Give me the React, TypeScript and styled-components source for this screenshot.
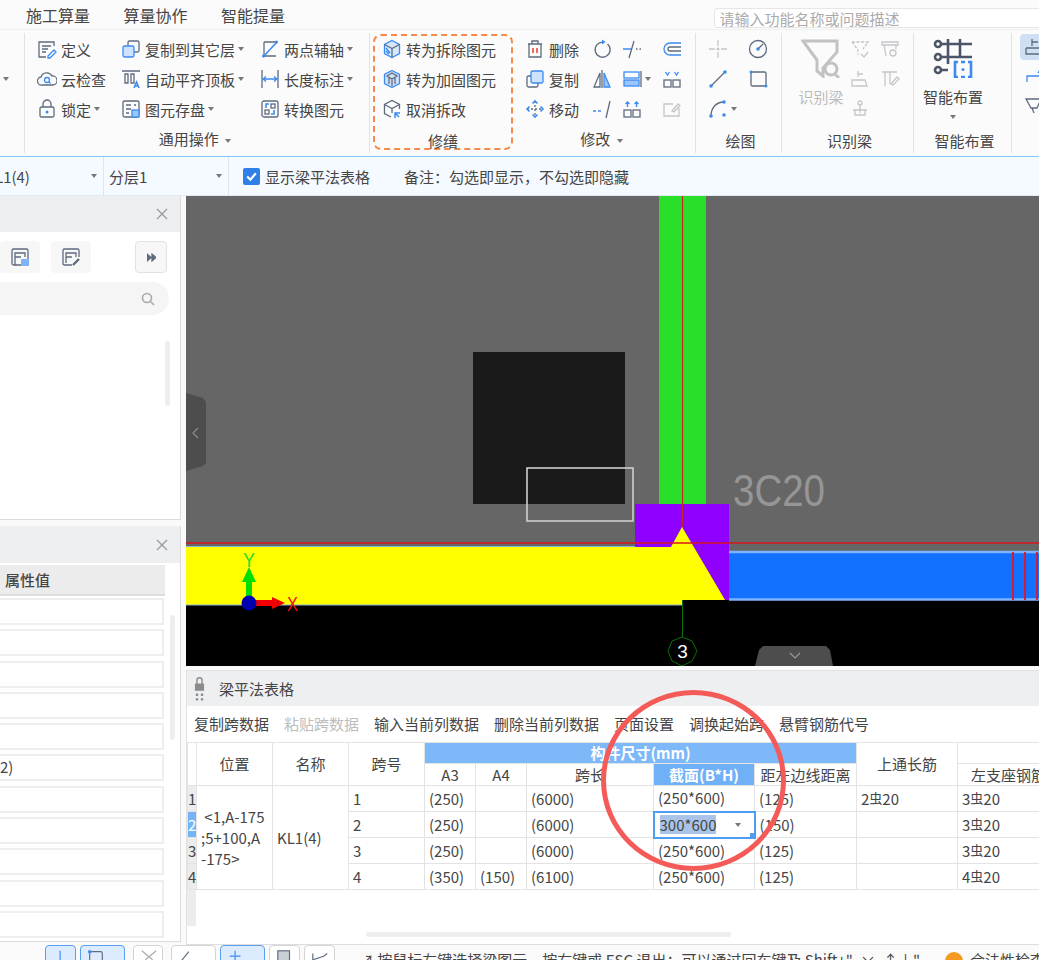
import React from 'react';
import styled, { createGlobalStyle } from 'styled-components';

const GREY = '#5f6b7e';
const BLUE = '#3d8bf2';
const PALE = '#c4c6ca';

const GlobalStyle = createGlobalStyle`
  html, body {
    margin: 0;
    padding: 0;
    width: 1039px;
    height: 960px;
    overflow: hidden;
    background: #fafafa;
  }
  * { box-sizing: border-box; }
`;

const Page = styled.div`
  position: relative;
  width: 1039px;
  height: 960px;
  overflow: hidden;
  display: flex;
  flex-direction: column;
  font-family: 'Noto Sans CJK SC', 'Noto Sans', sans-serif;
  font-size: 15px;
  color: #454545;
  background: #fafafa;
`;

const TabBar = styled.div`
  height: 30px;
  flex: none;
  display: flex;
  align-items: center;
  padding-left: 26px;
  background: #fbfbfb;
  border-bottom: 1px solid #f0f0f0;
`;

const Tab = styled.div`
  width: 97.5px;
  flex: none;
  font-size: 16px;
  line-height: 30px;
  white-space: nowrap;
`;

const SearchBox = styled.div`
  margin-left: 395px;
  margin-top: 7px;
  width: 330px;
  height: 20px;
  padding-left: 5px;
  flex: none;
  line-height: 19px;
  color: #ababab;
  background: #fff;
  border: 1px solid #e6e6e6;
  border-radius: 3px;
  white-space: nowrap;
`;

const Ribbon = styled.div`
  height: 125px;
  flex: none;
  display: flex;
  background: #fbfbfb;
`;

const Group = styled.div<{ $width: number; $divider?: boolean }>`
  position: relative;
  width: ${(p) => p.$width}px;
  flex: none;
  height: 120px;
  margin-top: 3px;
  display: flex;
  flex-direction: column;
  border-right: ${(p) => (p.$divider ? '1px solid #e2e2e2' : '0')};
`;

const RepairGroup = styled(Group)`
  height: 116px;
  margin: 4px 7px 0 3px;
  border: 2px dashed #f58a4b;
  border-radius: 8px;
`;

const GroupBody = styled.div<{ $left?: number; $top?: number }>`
  flex: 1;
  display: flex;
  padding: 1px 0 0 ${(p) => p.$left ?? 0}px;
  margin-top: ${(p) => p.$top ?? 0}px;
`;

const GroupTitle = styled.div<{ $pull?: number; $nudge?: number }>`
  height: 24px;
  line-height: 24px;
  text-align: center;
  white-space: nowrap;
  font-size: 15px;
  transform: translate(${(p) => p.$nudge ?? 0}px, ${(p) => p.$pull ?? 0}px);
`;

const Column = styled.div<{ $width: number }>`
  width: ${(p) => p.$width}px;
  flex: none;
  display: flex;
  flex-direction: column;
`;

const Tool = styled.div<{ $off?: boolean; $indent?: number }>`
  height: 30px;
  padding-left: ${(p) => p.$indent ?? 0}px;
  display: flex;
  align-items: center;
  gap: 4px;
  white-space: nowrap;
  color: ${(p) => (p.$off ? '#bdbdbd' : 'inherit')};
`;

const Caret = styled.span`
  width: 0;
  height: 0;
  margin-left: -1px;
  flex: none;
  border-left: 3.5px solid transparent;
  border-right: 3.5px solid transparent;
  border-top: 4px solid #777;
`;

const TitleCaret = styled(Caret)`
  display: inline-block;
  margin-left: 3px;
  vertical-align: middle;
`;

const Glyph = styled.svg<{ $size?: number; $stroke?: string; $weight?: number }>`
  width: ${(p) => p.$size ?? 20}px;
  height: ${(p) => p.$size ?? 20}px;
  flex: none;
  fill: none;
  stroke: ${(p) => p.$stroke ?? GREY};
  stroke-width: ${(p) => p.$weight ?? 1.3};
`;

const LockGlyph = styled.svg`
  width: 11px;
  height: 26px;
  flex: none;
  fill: #8b8b8b;
`;

const BigTool = styled.div<{ $off?: boolean; $width: number }>`
  width: ${(p) => p.$width}px;
  flex: none;
  padding-top: 4px;
  display: flex;
  flex-direction: column;
  align-items: center;
  gap: 8px;
  white-space: nowrap;
  color: ${(p) => (p.$off ? '#bdbdbd' : 'inherit')};
`;

const EdgeColumn = styled(Column)`
  padding-left: 8px;
`;

const ActiveTool = styled.div`
  width: 30px;
  height: 26px;
  margin-top: 4px;
  display: flex;
  align-items: center;
  padding-left: 4px;
  border-radius: 4px;
  background: #cfe0f5;
`;

const PlainTool = styled.div`
  height: 30px;
  padding-left: 4px;
  display: flex;
  align-items: center;
`;

const OptionBar = styled.div`
  height: 40px;
  margin-top: 1px;
  flex: none;
  display: flex;
  align-items: center;
  background: #f4faff;
  border-top: 1px solid #8cc4fb;
  border-bottom: 1px solid #dfeaf5;
`;

const Picker = styled.div<{ $width: number }>`
  width: ${(p) => p.$width}px;
  height: 100%;
  padding-right: 6px;
  flex: none;
  display: flex;
  align-items: center;
  justify-content: space-between;
  overflow: hidden;
  border-right: 1px solid #dde6ee;
`;

const PickerText = styled.span<{ $shift: number }>`
  margin-left: ${(p) => p.$shift}px;
`;

const CheckMark = styled.span`
  width: 17px;
  height: 17px;
  margin: 0 5px 0 14px;
  flex: none;
  display: flex;
  align-items: center;
  justify-content: center;
  border-radius: 2px;
  background: #2e7fe6;
`;

const Note = styled.span`
  margin-left: 34px;
  white-space: nowrap;
`;

const Main = styled.div`
  flex: 1;
  min-height: 0;
  display: flex;
`;

const Sidebar = styled.div`
  width: 186px;
  flex: none;
  display: flex;
  flex-direction: column;
  gap: 6px;
  padding-right: 5px;
`;

const SidePanel = styled.div<{ $height: number }>`
  position: relative;
  height: ${(p) => p.$height}px;
  flex: none;
  background: #fff;
  border-right: 1px solid #dcdcdc;
  border-bottom: 1px solid #dcdcdc;
`;

const PanelHead = styled.div<{ $height: number }>`
  height: ${(p) => p.$height}px;
  display: flex;
  align-items: center;
  justify-content: flex-end;
  padding-right: 12px;
  background: #eeeff1;
`;

const SideTools = styled.div`
  display: flex;
  align-items: flex-start;
  margin: 9px 0 9px;
  height: 32px;
`;

const SideButton = styled.div<{ $width: number; $gap: number; $framed?: boolean }>`
  width: ${(p) => p.$width}px;
  height: 32px;
  margin-left: ${(p) => p.$gap}px;
  display: flex;
  align-items: center;
  justify-content: center;
  border-radius: 4px;
  background: #f7f7f7;
  border: ${(p) => (p.$framed ? '1px solid #e2e2e2' : '0')};
`;

const SideSearch = styled.div`
  width: 169px;
  height: 33px;
  padding-right: 14px;
  display: flex;
  align-items: center;
  justify-content: flex-end;
  background: #f5f5f5;
  border-radius: 0 17px 17px 0;
`;

const ScrollThumb = styled.div<{ $top: number; $left: number; $height: number }>`
  position: absolute;
  top: ${(p) => p.$top}px;
  left: ${(p) => p.$left}px;
  width: 5px;
  height: ${(p) => p.$height}px;
  background: #eeeeee;
  border-radius: 3px;
`;

const PropHead = styled.div`
  width: 165px;
  height: 31px;
  margin-top: 2px;
  padding-left: 5px;
  display: flex;
  align-items: center;
  font-weight: 500;
  background: #ececec;
  border-bottom: 2px solid #dedede;
`;

const PropRows = styled.div`
  padding-top: 2px;
  display: flex;
  flex-direction: column;
  gap: 4.3px;
`;

const PropRow = styled.div`
  width: 164px;
  height: 27px;
  line-height: 22px;
  background: #fff;
  border: 2px solid #eeeeee;
  border-left: 0;
`;

const Workspace = styled.div`
  flex: 1;
  min-width: 0;
  display: flex;
  flex-direction: column;
`;

const Drawing = styled.svg`
  display: block;
  width: 853px;
  height: 470px;
  flex: none;
`;

const GridPanel = styled.div`
  height: 275px;
  margin-top: 4px;
  flex: none;
  position: relative;
  background: #fff;
  border-bottom: 1px solid #dedede;
  border-left: 1px solid #e2e2e2;
  overflow: hidden;
`;

const GridHead = styled.div`
  height: 36px;
  display: flex;
  align-items: center;
  padding-left: 7px;
  gap: 14px;
  background: #eeeff1;
  border-top: 1px solid #e2e2e2;
`;

const GridTools = styled.div`
  height: 35px;
  display: flex;
  align-items: center;
  padding-left: 7px;
  gap: 15px;
`;

const GridTool = styled.span<{ $off?: boolean }>`
  white-space: nowrap;
  color: ${(p) => (p.$off ? '#bdbdbd' : 'inherit')};
`;

const Sheet = styled.table`
  table-layout: fixed;
  width: 872px;
  border-collapse: collapse;
  border-top: 1px solid #e3e3e3;
  margin-top: 1px;
  font-size: 15px;
  td, th {
    padding: 0;
    border: 1px solid #e3e3e3;
    font-weight: 400;
    overflow: hidden;
    white-space: nowrap;
  }
`;

const HeadCell = styled.th<{ $tone?: 'band' | 'active' }>`
  text-align: center;
  line-height: 20px;
  background: ${(p) => (p.$tone === 'band' ? '#7db8f9' : p.$tone === 'active' ? '#6fb0f7' : '#fff')};
  color: ${(p) => (p.$tone ? '#fff' : 'inherit')};
  && { font-weight: ${(p) => (p.$tone ? 700 : 400)}; }
`;

const RowMark = styled.td<{ $active?: boolean }>`
  text-align: left;
  background: ${(p) => (p.$active ? '#74b5f8' : '#ececec')};
  color: ${(p) => (p.$active ? '#fff' : 'inherit')};
  font-weight: ${(p) => (p.$active ? 700 : 400)};
`;

const Cell = styled.td`
  height: 26px;
  padding-left: 4px !important;
  line-height: 22px;
`;

const WrapCell = styled.td`
  padding: 0 0 0 4px !important;
  line-height: 21px;
  && { white-space: pre; }
`;

const Rebar = styled.span`
  font-size: 13px;
  vertical-align: 2px;
`;

const EditCell = styled.td`
  position: relative;
  && { border: 2px solid #4f9df3; }
`;

const EditBody = styled.div`
  display: flex;
  align-items: center;
  padding-left: 5px;
  gap: 20px;
`;

const Selected = styled.span`
  background: #a9c4e8;
  line-height: 19px;
`;

const FillHandle = styled.span`
  position: absolute;
  right: -1px;
  bottom: -1px;
  width: 5px;
  height: 5px;
  background: #4f9df3;
`;

const RowMarkTail = styled.div`
  width: 9px;
  height: 36px;
  background: #ececec;
`;

const SheetScroll = styled.div`
  position: absolute;
  left: 179px;
  bottom: 7px;
  width: 365px;
  height: 5px;
  border-radius: 3px;
  background: #eeeeee;
`;

const StatusBar = styled.div`
  height: 15px;
  flex: none;
  overflow: hidden;
  display: flex;
  align-items: flex-start;
  padding-left: 45px;
  gap: 4px;
  background: #fafafa;
`;

const StatusButton = styled.div<{ $width: number; $on?: boolean; $gapLeft?: number }>`
  width: ${(p) => p.$width}px;
  height: 26px;
  margin-left: ${(p) => p.$gapLeft ?? 0}px;
  flex: none;
  padding: 3px 0 0 6px;
  border-radius: 4px;
  background: ${(p) => (p.$on ? '#dcebfd' : '#fff')};
  border: 1px solid ${(p) => (p.$on ? '#5a9ff0' : '#d4d4d4')};
`;

const StatusText = styled.span<{ $left: number }>`
  margin: 5px 0 0 ${(p) => p.$left}px;
  white-space: nowrap;
  line-height: 20px;
  flex: none;
`;

const HintDot = styled.span`
  width: 18px;
  height: 18px;
  margin: 7px 0 0 21px;
  flex: none;
  border-radius: 50%;
  background: #f39a1f;
`;

const Highlight = styled.div`
  position: absolute;
  left: 601px;
  top: 690px;
  width: 185px;
  height: 181px;
  border: 5px solid #f45b58;
  border-radius: 50%;
  pointer-events: none;
`;

const Close = () => (
  <Glyph viewBox="0 0 12 12" $size={12} $stroke="#9a9a9a">
    <path d="M1 1l10 10M11 1L1 11" />
  </Glyph>
);

const icons: Record<string, React.ReactNode> = {
  define: (
    <>
      <path d="M17 7V3H2v15h7" />
      <path d="M5 7h9M5 10h6M5 13h4" />
      <path d="M11 17l6-6 2 2-6 6h-2z" stroke={BLUE} />
    </>
  ),
  cloud: (
    <>
      <path d="M5 16a4 4 0 0 1-1-8 6 6 0 0 1 11-1 4.500 4.500 0 0 1 1 9z" />
      <circle cx="10" cy="11" r="2.500" stroke={BLUE} />
      <path d="M12 13l1.500 1.500" stroke={BLUE} />
    </>
  ),
  lock: (
    <>
      <rect x="3" y="8" width="14" height="10" rx="1.500" />
      <path d="M6 8V5a4 4 0 0 1 8 0v3" />
      <circle cx="10" cy="13" r="1.500" fill={BLUE} stroke="none" />
    </>
  ),
  copyLayer: (
    <>
      <rect x="7" y="2" width="11" height="11" rx="1.500" />
      <rect x="2" y="7" width="11" height="11" rx="1.500" fill="#cfe2fb" stroke={BLUE} />
    </>
  ),
  align: (
    <>
      <path d="M1 2h18M4 5v9h3V5zM10 5v9h3V5z" />
      <path d="M13 19l2.500-6 2.500 6M14 17h3" stroke={BLUE} strokeWidth="1.600" />
    </>
  ),
  save: (
    <>
      <rect x="2" y="2" width="16" height="16" rx="1.500" />
      <path d="M5 6h5M13 6h2M5 10h5M5 14h3" />
      <rect x="11" y="11" width="7" height="7" fill="#9cc6f8" stroke={BLUE} />
    </>
  ),
  planSave: (
    <>
      <rect x="2" y="2" width="16" height="16" rx="1.500" />
      <path d="M5 18V6h10v4M5 10h6" />
      <rect x="11" y="12" width="8" height="7" fill="#7cb4f6" stroke="none" />
    </>
  ),
  planEdit: (
    <>
      <path d="M11 18H3.500A1.500 1.500 0 0 1 2 16.500v-13A1.500 1.500 0 0 1 3.500 2h13A1.500 1.500 0 0 1 18 3.500V10" />
      <path d="M5 16V6h10v4M5 10h6" />
      <path d="M12 18l6-6" stroke={GREY} strokeWidth="2.400" />
    </>
  ),
  axis: (
    <>
      <path d="M4 3h12M4 3v14h12" />
      <path d="M3 18L17 3" stroke={BLUE} strokeWidth="1.600" />
      <circle cx="3.500" cy="17" r="1.500" fill={BLUE} stroke="none" />
      <circle cx="16.500" cy="3" r="1.500" fill={BLUE} stroke="none" />
    </>
  ),
  measure: (
    <>
      <path d="M2 1v18M18 1v18" />
      <path d="M3 10h14M6 7.500L3 10l3 2.500M14 7.500l3 2.500-3 2.500" stroke={BLUE} />
    </>
  ),
  convert: (
    <>
      <rect x="2" y="2" width="16" height="16" rx="2" />
      <rect x="5" y="11" width="4" height="4" />
      <rect x="11" y="5" width="4" height="4" />
      <path d="M9 5H6v4M11 15h3v-4" stroke={BLUE} strokeWidth="1.600" />
    </>
  ),
  cubeA: (
    <>
      <path d="M10 1.500l7.500 4v9l-7.500 4-7.500-4v-9z" stroke={BLUE} fill="#d8e8fc" />
      <path d="M2.500 5.500l7.500 4 7.500-4M10 9.500v9" stroke={GREY} />
      <path d="M4 9l4 5M4 12l3 3" stroke={BLUE} />
    </>
  ),
  cubeB: (
    <>
      <path d="M10 1.500l7.500 4v9l-7.500 4-7.500-4v-9z" stroke={BLUE} fill="#cfe2fb" />
      <path d="M5 7l5-3 5 3-5 3zM7 9v6M13 9v6M10 10v7" stroke={GREY} />
    </>
  ),
  cubeC: (
    <>
      <path d="M9 18l-6.500-3.500v-9L10 1.500l7.500 4V10" />
      <path d="M2.500 5.500L10 9.500l7.500-4M10 9.500V14" />
      <path d="M13 19v-5h5M13 14l4 4" stroke={BLUE} strokeWidth="1.500" />
    </>
  ),
  trash: (
    <>
      <path d="M3 5h14M7 5V2h6v3M4 5v13h12V5" />
      <path d="M8 9v5M12 9v5" stroke="#e5483f" strokeWidth="1.600" />
    </>
  ),
  copy: (
    <>
      <rect x="2" y="7" width="11" height="11" rx="1.500" />
      <rect x="6" y="2" width="12" height="12" rx="1.500" fill="#cfe2fb" stroke={BLUE} />
    </>
  ),
  move: (
    <>
      <path d="M10 2v16M2 10h16" stroke={GREY} strokeDasharray="2 2" />
      <path d="M7.500 4.500L10 2l2.500 2.500M7.500 15.500L10 18l2.500-2.500M4.500 7.500L2 10l2.500 2.500M15.500 7.500L18 10l-2.500 2.500" stroke={BLUE} strokeWidth="1.600" />
    </>
  ),
  rotate: (
    <>
      <path d="M11 3.200A7.500 7.500 0 1 0 15.500 5" />
      <path d="M10 0.500l3.500 2.500-3.500 2.500z" fill={BLUE} stroke="none" />
    </>
  ),
  mirror: (
    <>
      <path d="M10 1v18" />
      <path d="M8 4L2 18h6z" />
      <path d="M12 4l6 14h-6z" fill="#9cc6f8" stroke={BLUE} />
    </>
  ),
  dashTrim: (
    <>
      <path d="M1 12h3M6 12h3" stroke={BLUE} />
      <path d="M18 2l-4 17" />
    </>
  ),
  trim: (
    <>
      <path d="M1 10h9" stroke={BLUE} strokeWidth="1.500" />
      <path d="M12 2L7 19M14 10h1.500M17.500 10H19" />
    </>
  ),
  blocks: (
    <>
      <rect x="2" y="3" width="15" height="6" fill="#fff" stroke={BLUE} />
      <rect x="2" y="11" width="15" height="6" fill="#9cc6f8" stroke={BLUE} />
      <path d="M19 2v16" />
    </>
  ),
  splitUp: (
    <>
      <rect x="2" y="11" width="7" height="7" />
      <rect x="11" y="11" width="7" height="7" />
      <path d="M3.500 3l2 3 2-3M12.500 3l2 3 2-3" stroke={BLUE} />
    </>
  ),
  splitDown: (
    <>
      <rect x="2" y="11" width="7" height="7" />
      <rect x="11" y="11" width="7" height="7" />
      <path d="M3.500 5l2-2 2 2M12.500 5l2-2 2 2M5.500 3v5M14.500 3v5" stroke={BLUE} />
    </>
  ),
  offset: (
    <>
      <path d="M19 4H8a6 6 0 0 0 0 12h11" stroke={BLUE} />
      <path d="M19 8H8a2 2 0 0 0 0 4h11" stroke={GREY} />
    </>
  ),
  note: (
    <>
      <path d="M17 9v8H2V5h9" stroke={PALE} />
      <path d="M10 12l6-7 2 1.500-6 6.500z" stroke={PALE} />
    </>
  ),
  point: (
    <>
      <path d="M10 1v6M10 13v6M1 10h6M13 10h6" stroke={PALE} />
      <circle cx="10" cy="10" r="1.500" fill={PALE} stroke="none" />
    </>
  ),
  gauge: (
    <>
      <circle cx="10" cy="10" r="8.500" />
      <path d="M10 10l5-5" />
      <circle cx="10" cy="10" r="1.800" fill={BLUE} stroke="none" />
    </>
  ),
  line: (
    <>
      <path d="M3 17L17 3" />
      <circle cx="3" cy="17" r="1.800" fill={BLUE} stroke="none" />
      <circle cx="17" cy="3" r="1.800" fill={BLUE} stroke="none" />
    </>
  ),
  rect: (
    <>
      <rect x="3" y="3" width="15" height="14" rx="1.500" />
      <circle cx="3" cy="3" r="1.500" fill={BLUE} stroke="none" />
      <circle cx="18" cy="17" r="1.500" fill={BLUE} stroke="none" />
    </>
  ),
  arc: (
    <>
      <path d="M3 17C3 9 8 3 16 3" />
      <circle cx="3" cy="17" r="1.800" fill={BLUE} stroke="none" />
      <circle cx="16" cy="3" r="1.800" fill={BLUE} stroke="none" />
      <circle cx="16" cy="16" r="1.800" fill={BLUE} stroke="none" />
    </>
  ),
  paleA: (
    <>
      <path d="M2 3h16l-5 7M2 3l6 8v5" stroke={PALE} strokeDasharray="3 1.500" />
      <path d="M11 15l3 3 4-5" stroke={PALE} />
    </>
  ),
  paleB: (
    <>
      <path d="M2 3h16v3H2zM4 6l2 11M16 6v4" stroke={PALE} />
      <circle cx="13" cy="14" r="3" stroke={PALE} />
    </>
  ),
  paleC: (
    <>
      <path d="M8 2v6M8 5h5M2 11h13l2 6H2z" stroke={PALE} />
    </>
  ),
  paleD: (
    <>
      <path d="M2 3h15M5 3v14M10 3v12" stroke={PALE} />
      <path d="M11 15l6-7 2 2-6 6z" stroke={PALE} />
    </>
  ),
  paleE: (
    <>
      <circle cx="10" cy="4" r="2" stroke={PALE} />
      <path d="M3 11h14M5 11v5h10v-5M10 6v8" stroke={PALE} />
    </>
  ),
  rightA: (
    <>
      <path d="M8 2v7M8 5h6M2 11h14l3 6H2v-6" stroke={GREY} />
    </>
  ),
  rightB: (
    <>
      <path d="M3 17v-6h13v6M14 8l4-6 2 2" stroke={BLUE} />
    </>
  ),
  rightC: (
    <>
      <path d="M2 4h15l-4 9H7zM8 13l2 5" stroke={GREY} />
    </>
  ),
  statusLine: <path d="M9 2v14" stroke={BLUE} />,
  statusBox: (
    <>
      <rect x="3" y="3" width="14" height="14" rx="2" />
      <circle cx="3" cy="3" r="2" fill={BLUE} stroke="none" />
    </>
  ),
  statusCross: <path d="M2 2l12 10M18 2L6 12" stroke="#aaa" />,
  statusSlash: <path d="M3 14L12 3" />,
  statusPlus: <path d="M9 2v12M3 8h12" stroke={BLUE} />,
  statusDoc: <rect x="2" y="2" width="13" height="16" fill="#c9ced6" />,
  statusBend: <path d="M2 12l12-4 4-3M2 5v12" />
};

const Icon = ({ name, size }: { name: string; size?: number }) => (
  <Glyph viewBox="0 0 20 20" $size={size}>
    {icons[name]}
  </Glyph>
);

type ToolDef = { icon?: string; label?: string; caret?: boolean; off?: boolean };

const ToolColumn = ({ width, tools }: { width: number; tools: ToolDef[] }) => (
  <Column $width={width}>
    {tools.map((t, i) => (
      <Tool key={i} $off={t.off}>
        {t.icon && <Icon name={t.icon} />}
        {t.label && <span>{t.label}</span>}
        {t.caret && <Caret />}
      </Tool>
    ))}
  </Column>
);

const RebarText = ({ count }: { count?: number }) =>
  count ? (
    <>
      {count}
      <Rebar>虫</Rebar>20
    </>
  ) : null;

const sheetRows = [
  { span: '1', a3: '(250)', a4: '', len: '(6000)', sec: '(250*600)', dist: '(125)', top: 2, left: 3 },
  { span: '2', a3: '(250)', a4: '', len: '(6000)', sec: '300*600', dist: '(150)', top: 0, left: 3 },
  { span: '3', a3: '(250)', a4: '', len: '(6000)', sec: '(250*600)', dist: '(125)', top: 0, left: 3 },
  { span: '4', a3: '(350)', a4: '(150)', len: '(6100)', sec: '(250*600)', dist: '(125)', top: 0, left: 4 }
];

const columnWidths = [9, 76, 76, 76, 51, 51, 127, 101, 102, 101, 102];

const propRows = ['', '', '', '', '', '2)', '', '', '', '', ''];

const statusButtons = [
  { width: 31, on: true, icon: 'statusLine', gap: 0 },
  { width: 45, on: true, icon: 'statusBox', gap: 0 },
  { width: 30, on: false, icon: 'statusCross', gap: 4 },
  { width: 45, on: false, icon: 'statusSlash', gap: 4 },
  { width: 45, on: true, icon: 'statusPlus', gap: 0 },
  { width: 31, on: false, icon: 'statusDoc', gap: 0 },
  { width: 31, on: false, icon: 'statusBend', gap: 0 }
];

const Scene = () => (
  <Drawing viewBox="186 196 853 470">
    <rect x="186" y="196" width="853" height="470" fill="#666666" />
    <rect x="473" y="352" width="152" height="152" fill="#1a1a1a" />
    <rect x="527" y="468" width="106" height="53" fill="none" stroke="#cfcfcf" strokeWidth="1.600" />
    <rect x="659" y="196" width="47" height="308" fill="#2adf2a" />
    <text x="733" y="506" fontFamily="'Liberation Sans', sans-serif" fontSize="44" fill="#969696" textLength="92" lengthAdjust="spacingAndGlyphs">3C20</text>
    <rect x="186" y="605" width="853" height="61" fill="#000" />
    <rect x="682" y="600" width="357" height="6" fill="#000" />
    <rect x="729" y="551" width="310" height="49" fill="#1271ff" />
    <path d="M729 552H1039M729 599.500H1039" stroke="#7ab4ff" strokeWidth="2.500" />
    <path d="M635 504H729V600H725L682 527L671 547H635Z" fill="#8f00ff" />
    <path d="M186 547H671L682 527L725 600H682V605H186Z" fill="#ffff00" />
    <path d="M186 546.500H635M186 605H682" stroke="#8ab6d8" strokeWidth="1.200" />
    <path d="M186 543H1039" stroke="#d8161e" strokeWidth="1.500" />
    <path d="M682.500 196V527" stroke="#c8271f" strokeWidth="1.200" />
    <path d="M1013 552V600M1025 552V600M1037 552V600" stroke="#e0142a" strokeWidth="1.800" />
    <path d="M682.500 600V637" stroke="#0d6f0d" strokeWidth="1" />
    <path d="M682 637L692 641L697 651L692 661L682 666L672 661L668 651L672 641Z" fill="none" stroke="#0d6f0d" />
    <text x="682.500" y="658" textAnchor="middle" fontFamily="'Liberation Sans', sans-serif" fontSize="19" fill="#fff">3</text>
    <path d="M246 603V580H252V603Z" fill="#00e000" />
    <path d="M249 567L256 582H242Z" fill="#00e000" />
    <text x="243" y="567" fontFamily="'Liberation Sans', sans-serif" fontSize="21" fill="#2adf2a" textLength="12" lengthAdjust="spacingAndGlyphs">Y</text>
    <path d="M249 600H272V597L285 603L272 609V606H249Z" fill="#f00000" />
    <text x="287" y="611" fontFamily="'Liberation Sans', sans-serif" fontSize="21" fill="#f01010" textLength="11" lengthAdjust="spacingAndGlyphs">X</text>
    <ellipse cx="249" cy="603" rx="7.500" ry="7.500" fill="#0000b0" />
    <path d="M186 393L203 398L206 402V463L203 466L186 471Z" fill="#4d4d4d" />
    <path d="M198 428L193 433L198 438" fill="none" stroke="#8a8a8a" strokeWidth="1.200" />
    <path d="M755 666L759 650L763 646H826L830 650L833 666Z" fill="#4d4d4d" />
    <path d="M790 653L795 658L800 653" fill="none" stroke="#9a9a9a" strokeWidth="1.200" />
  </Drawing>
);

export default function App() {
  return (
    <Page>
      <GlobalStyle />
      <TabBar>
        <Tab>施工算量</Tab>
        <Tab>算量协作</Tab>
        <Tab>智能提量</Tab>
        <SearchBox>请输入功能名称或问题描述</SearchBox>
      </TabBar>
      <Ribbon>
        <Group $width={25} $divider>
          <GroupBody>
            <Column $width={24}>
              <Tool />
              <Tool $indent={4}>
                <Caret />
              </Tool>
            </Column>
          </GroupBody>
        </Group>
        <Group $width={345} $divider>
          <GroupBody $left={12}>
            <ToolColumn
              width={84}
              tools={[
                { icon: 'define', label: '定义' },
                { icon: 'cloud', label: '云检查' },
                { icon: 'lock', label: '锁定', caret: true }
              ]}
            />
            <ToolColumn
              width={139}
              tools={[
                { icon: 'copyLayer', label: '复制到其它层', caret: true },
                { icon: 'align', label: '自动平齐顶板', caret: true },
                { icon: 'save', label: '图元存盘', caret: true }
              ]}
            />
            <ToolColumn
              width={100}
              tools={[
                { icon: 'axis', label: '两点辅轴', caret: true },
                { icon: 'measure', label: '长度标注', caret: true },
                { icon: 'convert', label: '转换图元' }
              ]}
            />
          </GroupBody>
          <GroupTitle $pull={-2} $nudge={-2}>
            通用操作 <TitleCaret />
          </GroupTitle>
        </Group>
        <RepairGroup $width={140}>
          <GroupBody $left={7} $top={-3}>
            <ToolColumn
              width={125}
              tools={[
                { icon: 'cubeA', label: '转为拆除图元' },
                { icon: 'cubeB', label: '转为加固图元' },
                { icon: 'cubeC', label: '取消拆改' }
              ]}
            />
          </GroupBody>
          <GroupTitle $pull={5}>修缮</GroupTitle>
        </RepairGroup>
        <Group $width={176} $divider>
          <GroupBody $left={5}>
            <ToolColumn
              width={67}
              tools={[
                { icon: 'trash', label: '删除' },
                { icon: 'copy', label: '复制' },
                { icon: 'move', label: '移动' }
              ]}
            />
            <ToolColumn width={30} tools={[{ icon: 'rotate' }, { icon: 'mirror' }, { icon: 'dashTrim' }]} />
            <ToolColumn
              width={40}
              tools={[{ icon: 'trim' }, { icon: 'blocks', caret: true }, { icon: 'splitDown' }]}
            />
            <ToolColumn width={30} tools={[{ icon: 'offset' }, { icon: 'splitUp' }, { icon: 'note' }]} />
          </GroupBody>
          <GroupTitle $pull={-2} $nudge={-6}>
            修改 <TitleCaret />
          </GroupTitle>
        </Group>
        <Group $width={86} $divider>
          <GroupBody $left={12}>
            <ToolColumn width={40} tools={[{ icon: 'point' }, { icon: 'line' }, { icon: 'arc', caret: true }]} />
            <ToolColumn width={30} tools={[{ icon: 'gauge' }, { icon: 'rect' }]} />
          </GroupBody>
          <GroupTitle $pull={0} $nudge={2}>绘图</GroupTitle>
        </Group>
        <Group $width={132} $divider>
          <GroupBody $left={10}>
            <BigTool $width={58} $off>
              <Glyph viewBox="0 0 40 40" $size={40} $stroke="#c2c2c2" $weight={3}>
                <path d="M2 3H36V14L22 30V38L16 33V22Z" />
                <circle cx="30" cy="31" r="6" fill="#fbfbfb" />
                <path d="M34 36l4 4" />
              </Glyph>
              <span>识别梁</span>
            </BigTool>
            <ToolColumn width={30} tools={[{ icon: 'paleA' }, { icon: 'paleC' }, { icon: 'paleE' }]} />
            <ToolColumn width={30} tools={[{ icon: 'paleB' }, { icon: 'paleD' }]} />
          </GroupBody>
          <GroupTitle $pull={0} $nudge={2}>识别梁</GroupTitle>
        </Group>
        <Group $width={98} $divider>
          <GroupBody>
            <BigTool $width={78}>
              <Glyph viewBox="0 0 40 40" $size={40} $stroke="#4b5567" $weight={2.6}>
                <path d="M15 1V26M27 1V20M8 6H39M8 19H39M8 32H15" />
                <circle cx="5" cy="6" r="3" fill="#fbfbfb" />
                <circle cx="5" cy="19" r="3" fill="#fbfbfb" />
                <circle cx="5" cy="32" r="3" fill="#fbfbfb" />
                <path d="M25 24H22V39H25M35 24H38V39H35M28 24H32M28 39H32" stroke={BLUE} />
                <circle cx="30" cy="31.500" r="1.500" fill={BLUE} stroke="none" />
              </Glyph>
              <span>智能布置</span>
              <Caret />
            </BigTool>
          </GroupBody>
          <GroupTitle $pull={0} $nudge={2}>智能布置</GroupTitle>
        </Group>
        <EdgeColumn $width={28}>
          <ActiveTool>
            <Icon name="rightA" />
          </ActiveTool>
          <PlainTool>
            <Icon name="rightB" />
          </PlainTool>
          <PlainTool>
            <Icon name="rightC" />
          </PlainTool>
        </EdgeColumn>
      </Ribbon>
      <OptionBar>
        <Picker $width={104}>
          <PickerText $shift={-5}>L1(4)</PickerText>
          <Caret />
        </Picker>
        <Picker $width={125}>
          <PickerText $shift={5}>分层1</PickerText>
          <Caret />
        </Picker>
        <CheckMark>
          <Glyph viewBox="0 0 12 12" $size={13} $stroke="#fff" $weight={2}>
            <path d="M2 6l3 3 5-6" />
          </Glyph>
        </CheckMark>
        <span>显示梁平法表格</span>
        <Note>备注：勾选即显示，不勾选即隐藏</Note>
      </OptionBar>
      <Main>
        <Sidebar>
          <SidePanel $height={324}>
            <PanelHead $height={36}>
              <Close />
            </PanelHead>
            <SideTools>
              <SideButton $width={40} $gap={0}>
                <Icon name="planSave" />
              </SideButton>
              <SideButton $width={40} $gap={11}>
                <Icon name="planEdit" />
              </SideButton>
              <SideButton $width={32} $gap={44} $framed>
                <Glyph viewBox="0 0 10 10" $size={9} $stroke="#5f6b7e">
                  <path d="M0 1l4.500 4L0 9zM5.500 1L10 5l-4.500 4z" fill="#5f6b7e" />
                </Glyph>
              </SideButton>
            </SideTools>
            <SideSearch>
              <Glyph viewBox="0 0 14 14" $size={14} $stroke="#aaa" $weight={1.6}>
                <circle cx="6" cy="6" r="4.500" />
                <path d="M9.500 9.500L13 13" />
              </Glyph>
            </SideSearch>
            <ScrollThumb $top={145} $left={165} $height={65} />
          </SidePanel>
          <SidePanel $height={416}>
            <PanelHead $height={37}>
              <Close />
            </PanelHead>
            <PropHead>属性值</PropHead>
            <PropRows>
              {propRows.map((value, i) => (
                <PropRow key={i}>{value}</PropRow>
              ))}
            </PropRows>
            <ScrollThumb $top={89} $left={170} $height={125} />
          </SidePanel>
        </Sidebar>
        <Workspace>
          <Scene />
          <GridPanel>
            <GridHead>
              <LockGlyph viewBox="0 0 12 28">
                <path d="M1 8h10v8H1zM2.500 8V4.500a3.500 3.500 0 0 1 7 0V8H8V4.500a2 2 0 0 0-4 0V8z" />
                <path d="M2 19h2.500v2.500H2zM7.500 19H10v2.500H7.500zM2 24h2.500v2.500H2zM7.500 24H10v2.500H7.500z" />
              </LockGlyph>
              <span>梁平法表格</span>
            </GridHead>
            <GridTools>
              <GridTool>复制跨数据</GridTool>
              <GridTool $off>粘贴跨数据</GridTool>
              <GridTool>输入当前列数据</GridTool>
              <GridTool>删除当前列数据</GridTool>
              <GridTool>页面设置</GridTool>
              <GridTool>调换起始跨</GridTool>
              <GridTool>悬臂钢筋代号</GridTool>
            </GridTools>
            <Sheet>
              <colgroup>
                {columnWidths.map((w, i) => (
                  <col key={i} style={{ width: w }} />
                ))}
              </colgroup>
              <thead>
                <tr style={{ height: 21 }}>
                  <HeadCell rowSpan={2} />
                  <HeadCell rowSpan={2}>位置</HeadCell>
                  <HeadCell rowSpan={2}>名称</HeadCell>
                  <HeadCell rowSpan={2}>跨号</HeadCell>
                  <HeadCell colSpan={5} $tone="band">
                    构件尺寸(mm)
                  </HeadCell>
                  <HeadCell rowSpan={2}>上通长筋</HeadCell>
                  <HeadCell />
                </tr>
                <tr style={{ height: 22 }}>
                  <HeadCell>A3</HeadCell>
                  <HeadCell>A4</HeadCell>
                  <HeadCell>跨长</HeadCell>
                  <HeadCell $tone="active">截面(B*H)</HeadCell>
                  <HeadCell>距左边线距离</HeadCell>
                  <HeadCell>左支座钢筋</HeadCell>
                </tr>
              </thead>
              <tbody>
                {sheetRows.map((row, i) => (
                  <tr key={row.span}>
                    <RowMark $active={i === 1}>{row.span}</RowMark>
                    {i === 0 && (
                      <>
                        <WrapCell rowSpan={4}>{' <1,A-175\n;5+100,A\n-175>'}</WrapCell>
                        <Cell rowSpan={4}>KL1(4)</Cell>
                      </>
                    )}
                    <Cell>{row.span}</Cell>
                    <Cell>{row.a3}</Cell>
                    <Cell>{row.a4}</Cell>
                    <Cell>{row.len}</Cell>
                    {i === 1 ? (
                      <EditCell>
                        <EditBody>
                          <Selected>{row.sec}</Selected>
                          <Caret />
                        </EditBody>
                        <FillHandle />
                      </EditCell>
                    ) : (
                      <Cell>{row.sec}</Cell>
                    )}
                    <Cell>{row.dist}</Cell>
                    <Cell>
                      <RebarText count={row.top} />
                    </Cell>
                    <Cell>
                      <RebarText count={row.left} />
                    </Cell>
                  </tr>
                ))}
              </tbody>
            </Sheet>
            <RowMarkTail />
            <SheetScroll />
          </GridPanel>
        </Workspace>
      </Main>
      <StatusBar>
        {statusButtons.map((b) => (
          <StatusButton key={b.icon} $width={b.width} $on={b.on} $gapLeft={b.gap}>
            <Icon name={b.icon} size={18} />
          </StatusButton>
        ))}
        <StatusText $left={20}>↗ 按鼠标左键选择梁图元，按右键或 ESC 退出；可以通过回车键及 Shift+"→←↑↓"</StatusText>
        <HintDot />
        <StatusText $left={3}>合法性检查</StatusText>
      </StatusBar>
      <Highlight />
    </Page>
  );
}
